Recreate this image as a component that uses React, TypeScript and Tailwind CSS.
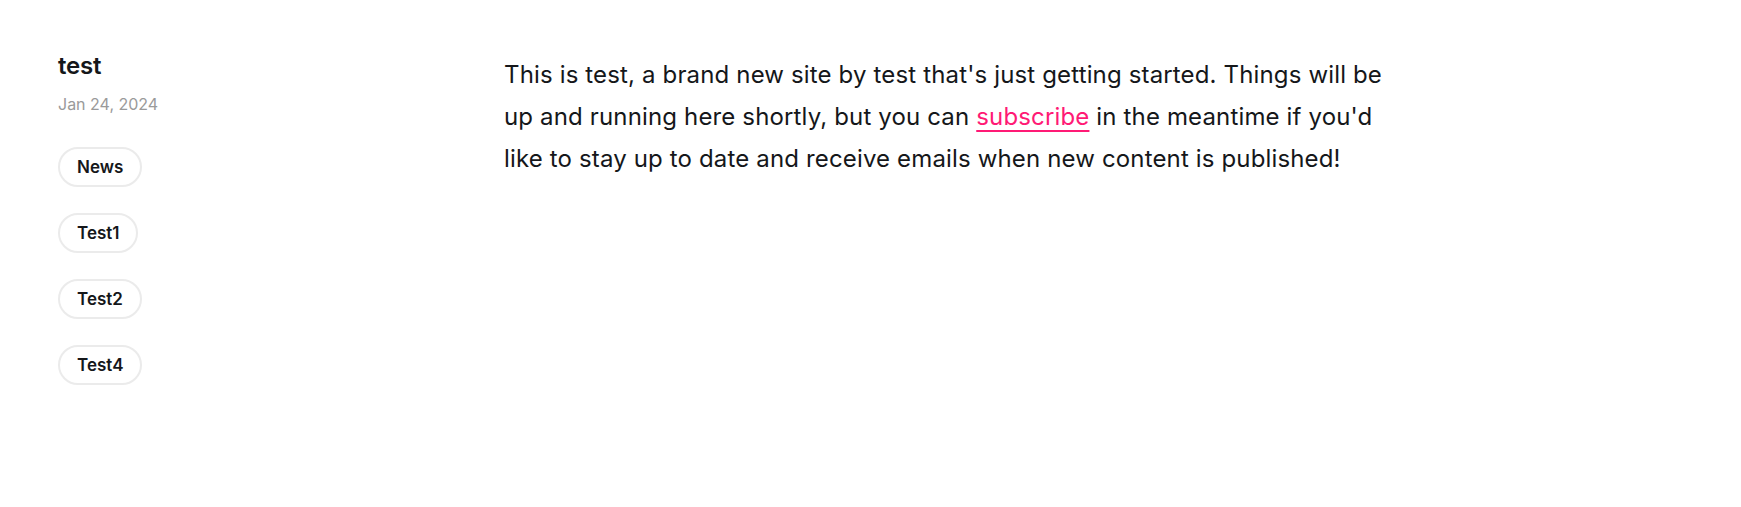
const tags = ['News', 'Test1', 'Test2', 'Test4'];

export default function App() {
  return (
    <div className="min-h-[507px] w-full bg-white font-['Inter',sans-serif] text-[#15171a]">
      <div className="flex pl-[58px] pt-[51px]">
        <aside className="w-[446px] shrink-0">
          <h1 className="text-[24px] font-semibold leading-[30px] tracking-[-0.01em]">test</h1>
          <div className="mt-[13px] text-[16px] leading-[20px] text-[#9a9a9a]">Jan 24, 2024</div>
          <div className="mt-[33px] flex flex-col items-start gap-[26px]">
            {tags.map((tag) => (
              <span
                key={tag}
                className="rounded-full border-2 border-[#ebebeb] px-[17px] py-[8px] text-[17px] font-semibold leading-[20px]"
              >
                {tag}
              </span>
            ))}
          </div>
        </aside>
        <p className="mt-[3px] w-[892px] text-[24px] leading-[42px] tracking-[0.15px]">
          This is test, a brand new site by test that's just getting started. Things will be
          up and running here shortly, but you can{' '}
          <a href="#" className="text-[#ff1a75] underline decoration-2 underline-offset-[5px]">
            subscribe
          </a>{' '}
          in the meantime if you'd like to stay up to date and receive emails when new content is
          published!
        </p>
      </div>
    </div>
  );
}
